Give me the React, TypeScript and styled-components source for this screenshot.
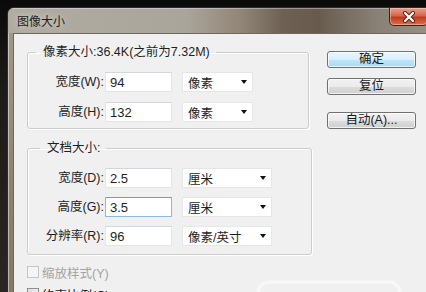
import React from "react"
import styled, { createGlobalStyle } from "styled-components"

const GlobalStyle = createGlobalStyle`
  html, body {
    margin: 0;
    padding: 0;
  }
  body {
    width: 426px;
    height: 292px;
    overflow: hidden;
    background: linear-gradient(180deg, #0a0a0a 0%, #1d1b18 30%, #2b2621 100%);
    font-family: "Liberation Sans", "Noto Sans CJK SC", sans-serif;
  }
`

const Page = styled.div`
  padding: 7px 0 0 7px;
  height: 292px;
  box-sizing: border-box;
  overflow: hidden;
  position: relative;
`

const Window = styled.div`
  width: 445px;
  height: 300px;
  box-sizing: border-box;
  border: 1px solid #2e2a25;
  border-right: none;
  border-top-left-radius: 7px;
  background: linear-gradient(180deg, #a39a8c 0%, #8f8170 60%, #857766 100%);
  box-shadow: inset 1px 1px 0 rgba(255, 255, 255, 0.45);
  display: flex;
  flex-direction: column;
  overflow: hidden;
`

const TitleBar = styled.div`
  height: 25px;
  display: flex;
  align-items: flex-start;
  background: linear-gradient(
    90deg,
    #b0aca2 0%,
    #aaa59a 40%,
    #928778 52%,
    #6e6154 62%,
    #685b4e 70%,
    #877f73 82%,
    #9c978d 100%
  );
  box-shadow: inset 0 1px 0 rgba(255, 255, 255, 0.35);
`

const Title = styled.div`
  padding: 6px 0 0 9px;
  font-family: "Noto Sans CJK SC", sans-serif;
  font-size: 12px;
  line-height: 14px;
  color: #1b1b1b;
  text-shadow: 0 0 6px rgba(255, 255, 255, 0.7);
`

const CloseButton = styled.div`
  margin-left: auto;
  margin-right: 24px;
  width: 39px;
  height: 18px;
  box-sizing: border-box;
  border: 1px solid #4a1d14;
  border-top: none;
  border-radius: 0 0 5px 5px;
  background: linear-gradient(180deg, #e9a090 0%, #d9644a 45%, #c23a1e 55%, #d9704e 100%);
  box-shadow: inset 0 0 0 1px rgba(255, 220, 200, 0.45);
  display: flex;
  align-items: center;
  justify-content: center;
`

const Client = styled.div`
  flex: 1;
  margin-left: 5px;
  background: #f0f0f0;
  border-top: 1px solid #6f665c;
  border-left: 1px solid #6f665c;
  display: flex;
  align-items: flex-start;
  padding: 10px 0 0 13px;
`

const LeftColumn = styled.div`
  width: 285px;
  display: flex;
  flex-direction: column;
`

const Group = styled.fieldset<{ $width: number; $bottom: number; $top?: number }>`
  width: ${(p) => p.$width}px;
  box-sizing: border-box;
  margin: ${(p) => p.$top ?? 0}px 0 0 0;
  padding: 12px 0 ${(p) => p.$bottom}px 0;
  border: 1px solid #cdcdcd;
  border-radius: 3px;
  box-shadow: 1px 1px 0 #ffffff, inset 1px 1px 0 #ffffff;
`

const Legend = styled.legend<{ $indent: number }>`
  margin-left: ${(p) => p.$indent}px;
  padding: 0 6px 0 7px;
  font-size: 12.5px;
  line-height: 16px;
  color: #1e1e1e;
`

const Rows = styled.div<{ $gap: number }>`
  display: flex;
  flex-direction: column;
  gap: ${(p) => p.$gap}px;
`

const Row = styled.div`
  display: flex;
  align-items: center;
  height: 20px;
`

const Label = styled.span`
  width: 76px;
  margin-right: 1px;
  text-align: right;
  font-size: 12.5px;
  line-height: 20px;
  color: #1e1e1e;
  white-space: nowrap;
`

const TextBox = styled.input<{ $focused?: boolean }>`
  width: 67px;
  height: 20px;
  box-sizing: border-box;
  margin: 0;
  padding: 0 0 0 4px;
  border: 1px solid ${(p) => (p.$focused ? "#8fb8de" : "#e2e6ea")};
  border-top-color: ${(p) => (p.$focused ? "#6c9fd0" : "#d3d7db")};
  background: #ffffff;
  font-family: "Liberation Sans", sans-serif;
  font-size: 13px;
  color: #1e1e1e;
  outline: none;
`

const Select = styled.div<{ $width: number }>`
  width: ${(p) => p.$width}px;
  height: 20px;
  box-sizing: border-box;
  margin-left: 10px;
  padding: 0 5px 0 5px;
  border: 1px solid #e4e7ea;
  background: #ffffff;
  display: flex;
  align-items: center;
  justify-content: space-between;
  font-size: 12.5px;
  color: #1e1e1e;
`

const Arrow = styled.span`
  width: 0;
  height: 0;
  border-left: 3.5px solid transparent;
  border-right: 3.5px solid transparent;
  border-top: 4px solid #111111;
`

const CheckRow = styled.div<{ $disabled?: boolean }>`
  display: flex;
  align-items: center;
  gap: 3px;
  height: 16px;
  margin-top: 6px;
  font-size: 12.5px;
  color: ${(p) => (p.$disabled ? "#a3a3a3" : "#1e1e1e")};
  &:first-of-type {
    margin-top: 9px;
  }
`

const CheckBox = styled.span<{ $disabled?: boolean }>`
  width: 12px;
  height: 12px;
  box-sizing: border-box;
  border: 1px solid ${(p) => (p.$disabled ? "#c6c6c6" : "#8e8f8f")};
  background: ${(p) =>
    p.$disabled ? "#f4f4f4" : "linear-gradient(135deg, #dcdcdc 0%, #fbfbfb 100%)"};
`

const Buttons = styled.div`
  margin: 7px 0 0 15px;
  display: flex;
  flex-direction: column;
`

const Button = styled.div<{ $primary?: boolean; $gap: number }>`
  width: 89px;
  height: 17px;
  box-sizing: border-box;
  margin-top: ${(p) => p.$gap}px;
  border: 1px solid ${(p) => (p.$primary ? "#3c7fb1" : "#707070")};
  border-radius: 3px;
  background: ${(p) =>
    p.$primary
      ? "linear-gradient(180deg, #eaf6fd 0%, #d9f0fc 50%, #bee6fd 51%, #a7d9f5 100%)"
      : "linear-gradient(180deg, #f2f2f2 0%, #ebebeb 50%, #dddddd 51%, #cfcfcf 100%)"};
  box-shadow: inset 0 0 0 1px rgba(255, 255, 255, 0.7);
  display: flex;
  align-items: center;
  justify-content: center;
  font-size: 12.5px;
  line-height: 15px;
  color: #1a1a1a;
`

const Watermark = styled.div`
  position: absolute;
  left: 257px;
  top: 281px;
  width: 140px;
  height: 24px;
  border: 2px solid rgba(255, 255, 255, 0.9);
  border-radius: 12px;
  filter: blur(1px);
`

type Field = {
  label: string
  value: string
  unit: string
  focused?: boolean
}

const pixelFields: Field[] = [
  { label: "宽度(W):", value: "94", unit: "像素" },
  { label: "高度(H):", value: "132", unit: "像素" },
]

const docFields: Field[] = [
  { label: "宽度(D):", value: "2.5", unit: "厘米" },
  { label: "高度(G):", value: "3.5", unit: "厘米", focused: true },
  { label: "分辨率(R):", value: "96", unit: "像素/英寸" },
]

const FieldRow = ({ field, selectWidth }: { field: Field; selectWidth: number }) => (
  <Row>
    <Label>{field.label}</Label>
    <TextBox readOnly value={field.value} $focused={field.focused} />
    <Select $width={selectWidth}>
      <span>{field.unit}</span>
      <Arrow />
    </Select>
  </Row>
)

const App = () => (
  <Page>
    <GlobalStyle />
    <Window>
      <TitleBar>
        <Title>图像大小</Title>
        <CloseButton>
          <svg width="14" height="12" viewBox="0 0 14 12">
            <path d="M3 2 L11 10 M11 2 L3 10" stroke="#5a2418" strokeWidth="4" strokeLinecap="round" />
            <path d="M3 2 L11 10 M11 2 L3 10" stroke="#ffffff" strokeWidth="2.2" strokeLinecap="round" />
          </svg>
        </CloseButton>
      </TitleBar>
      <Client>
        <LeftColumn>
          <Group $width={282} $bottom={6}>
            <Legend $indent={8}>像素大小:36.4K(之前为7.32M)</Legend>
            <Rows $gap={10}>
              {pixelFields.map((f) => (
                <FieldRow key={f.label} field={f} selectWidth={71} />
              ))}
            </Rows>
          </Group>
          <Group $width={285} $bottom={8} $top={11}>
            <Legend $indent={12}>文档大小:</Legend>
            <Rows $gap={9}>
              {docFields.map((f) => (
                <FieldRow key={f.label} field={f} selectWidth={90} />
              ))}
            </Rows>
          </Group>
          <CheckRow $disabled>
            <CheckBox $disabled />
            缩放样式(Y)
          </CheckRow>
          <CheckRow>
            <CheckBox />
            约束比例(C)
          </CheckRow>
        </LeftColumn>
        <Buttons>
          <Button $primary $gap={0}>确定</Button>
          <Button $gap={10}>复位</Button>
          <Button $gap={17}>自动(A)...</Button>
        </Buttons>
      </Client>
    </Window>
    <Watermark />
  </Page>
)

export default App
